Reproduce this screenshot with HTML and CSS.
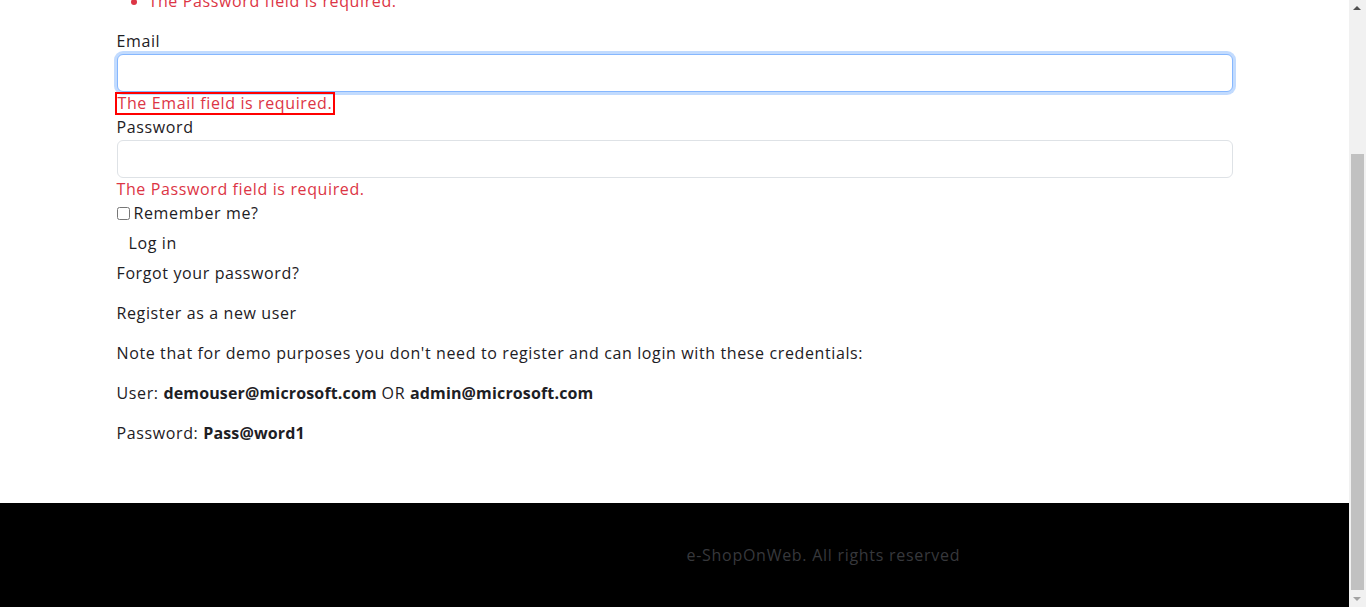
FILE: index.html
```html
<!DOCTYPE html>
<html lang="en">
<head>
<meta charset="utf-8">
<title>Log in - eShopOnWeb</title>
<link rel="stylesheet" href="styles.css">
</head>
<body>
<header class="site-header">
  <div class="container">
    <span class="brand">eShopOnWeb</span>
  </div>
</header>
<main class="container login">
  <h1 class="title">Log in</h1>
  <form class="login-form" method="post">
    <div class="summary">
      <ul>
        <li>The Email field is required.</li>
        <li>The Password field is required.</li>
      </ul>
    </div>
    <div class="group">
      <label class="label" for="email">Email</label>
      <input class="control control-focus" id="email" type="email">
      <span class="err err-outlined">The Email field is required.</span>
    </div>
    <div class="group">
      <label class="label" for="password">Password</label>
      <input class="control" id="password" type="password">
      <span class="err">The Password field is required.</span>
    </div>
    <div class="check-row">
      <input class="check" id="remember" type="checkbox">
      <label class="check-label" for="remember">Remember me?</label>
    </div>
    <div class="btn-row">
      <button class="btn" type="button">Log in</button>
    </div>
    <p class="para"><a class="link" href="#">Forgot your password?</a></p>
    <p class="para"><a class="link" href="#">Register as a new user</a></p>
    <p class="para">Note that for demo purposes you don't need to register and can login with these credentials:</p>
    <p class="para">User: <b class="strong">demouser@microsoft.com</b> OR <b class="strong">admin@microsoft.com</b></p>
    <p class="para">Password: <b class="strong">Pass@word1</b></p>
  </form>
</main>
<footer class="site-footer">
  <div class="container">
    <div class="footer-row">
      <section class="footer-col"></section>
      <section class="footer-col">
        <div class="footer-text">e-ShopOnWeb. All rights reserved</div>
      </section>
    </div>
  </div>
</footer>
<div class="scrollbar" aria-hidden="true">
  <span class="sb-arrow sb-up"></span>
  <span class="sb-thumb"></span>
  <span class="sb-arrow sb-down"></span>
</div>
<script src="script.js"></script>
</body>
</html>
```
FILE: styles.css
```css
* { box-sizing: border-box; }
html { margin: 0; padding: 0; }
body {
  margin: 0 17px 0 0;
  padding: 0;
  font-family: "Open Sans", "Liberation Sans", sans-serif;
  font-size: 16px;
  line-height: 24px;
  letter-spacing: 0.62px;
  color: #1d2024;
  background: #fff;
}
.container {
  max-width: 1140px;
  margin: 0 auto;
  padding: 0 12px;
}
.site-header {
  background: #000;
  height: 80px;
}
.site-header .container {
  height: 80px;
  display: flex;
  align-items: center;
}
.brand { color: #fff; font-weight: 700; font-size: 20px; }
.login { padding-bottom: 2px; }
.title {
  margin: 20px 0 16px;
  font-size: 32px;
  line-height: 38px;
  font-weight: 500;
}
.summary { color: #dc3545; }
.summary ul { margin: 0 0 16px; padding-left: 32px; }
.group { display: block; }
.label { display: inline-block; }
.control {
  display: block;
  width: 100%;
  height: 38px;
  margin-top: 1px;
  margin-bottom: -1px;
  padding: 6px 12px;
  font: inherit;
  color: #212529;
  background: #fff;
  border: 1px solid #dee2e6;
  border-radius: 6px;
  outline: none;
}
.control-focus {
  border-color: #86b7fe;
  box-shadow: 0 0 0 3px rgba(13, 110, 253, 0.25);
}
.err { color: #dc3545; }
.err-outlined {
  display: inline-block;
  line-height: 19px;
  padding: 0 1px;
  outline: 2px solid #ff0000;
  outline-offset: 0;
}
.check-row {
  display: flex;
  align-items: center;
  height: 24px;
  gap: 4px;
}
.check { margin: 0; width: 13px; height: 13px; }
.btn-row { display: flex; height: 36px; }
.btn {
  font: inherit;
  letter-spacing: inherit;
  color: #1d2024;
  background: transparent;
  border: 0;
  padding: 6px 12px;
  line-height: 24px;
  cursor: pointer;
}
.para { margin: 0 0 16px; }
.link { color: #1d2024; text-decoration: none; }
.strong { font-weight: 700; letter-spacing: 0.15px; }
.site-footer {
  background: #000;
  margin-top: 40px;
  padding: 40px 0;
}
.footer-row { display: flex; margin: 0 -12px; }
.footer-col { flex: 0 0 50%; padding: 0 12px; }
.footer-text { color: #37383c; letter-spacing: 0.72px; }

.scrollbar {
  position: fixed;
  top: 0;
  right: 0;
  width: 17px;
  height: 100%;
  background: #f1f1f1;
}
.sb-thumb {
  position: absolute;
  left: 2px;
  top: 154px;
  width: 13px;
  height: 436px;
  background: #c1c1c1;
}
.sb-arrow {
  position: absolute;
  left: 4px;
  width: 0;
  height: 0;
  border-left: 4px solid transparent;
  border-right: 4px solid transparent;
}
.sb-up {
  top: 6px;
  border-bottom: 4px solid #505050;
}
.sb-down {
  bottom: 6px;
  border-top: 4px solid #a3a3a3;
}
```
FILE: script.js
```js
function toBottom() {
  window.scrollTo(0, document.documentElement.scrollHeight);
}
toBottom();
window.addEventListener('load', toBottom);
```
